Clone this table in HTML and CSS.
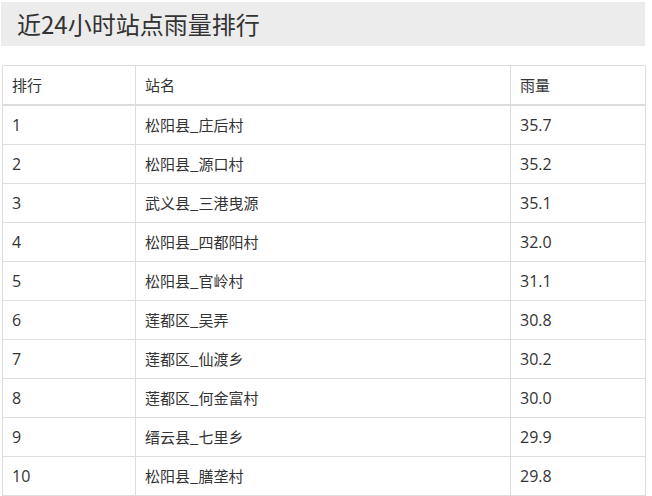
FILE: index.html
```html
<!DOCTYPE html>
<html lang="zh">
<head>
<meta charset="utf-8">
<link rel="stylesheet" href="styles.css">
</head>
<body>
<div class="page">
  <h1 class="title">近24小时站点雨量排行</h1>
  <table class="rank">
    <colgroup><col class="c1"><col class="c2"><col class="c3"></colgroup>
    <thead>
      <tr><th>排行</th><th>站名</th><th>雨量</th></tr>
    </thead>
    <tbody>
      <tr><td>1</td><td>松阳县_庄后村</td><td>35.7</td></tr>
      <tr><td>2</td><td>松阳县_源口村</td><td>35.2</td></tr>
      <tr><td>3</td><td>武义县_三港曳源</td><td>35.1</td></tr>
      <tr><td>4</td><td>松阳县_四都阳村</td><td>32.0</td></tr>
      <tr><td>5</td><td>松阳县_官岭村</td><td>31.1</td></tr>
      <tr><td>6</td><td>莲都区_吴弄</td><td>30.8</td></tr>
      <tr><td>7</td><td>莲都区_仙渡乡</td><td>30.2</td></tr>
      <tr><td>8</td><td>莲都区_何金富村</td><td>30.0</td></tr>
      <tr><td>9</td><td>缙云县_七里乡</td><td>29.9</td></tr>
      <tr><td>10</td><td>松阳县_膳垄村</td><td>29.8</td></tr>
    </tbody>
  </table>
</div>
</body>
</html>
```
FILE: styles.css
```css
html, body {
  margin: 0;
  padding: 0;
  background: #fff;
}
.page {
  width: 644px;
  padding: 2px 0 0 1px;
  font-family: "Open Sans", "Noto Sans CJK SC", sans-serif;
  color: #333;
}
.title {
  margin: 0;
  height: 44px;
  box-sizing: border-box;
  padding: 0 0 0 16px;
  background: #ececec;
  font-family: "Noto Sans CJK SC", sans-serif;
  font-weight: 400;
  font-size: 24px;
  line-height: 44px;
  color: #333;
}
.rank {
  margin: 19px 0 0 1px;
  width: 643px;
  border-collapse: collapse;
  font-size: 15px;
  table-layout: fixed;
}
.c1 { width: 133px; }
.c2 { width: 375px; }
.c3 { width: 135px; }
.rank th, .rank td {
  border: 1px solid #ddd;
  padding: 9px 9px;
  line-height: 20px;
  text-align: left;
  font-weight: 400;
  font-family: "Noto Sans CJK SC", sans-serif;
}
.rank td:first-child, .rank td:last-child {
  font-family: "Open Sans", "Noto Sans CJK SC", sans-serif;
  font-size: 16px;
}
.rank thead th {
  border-bottom: 2px solid #ddd;
}
```
